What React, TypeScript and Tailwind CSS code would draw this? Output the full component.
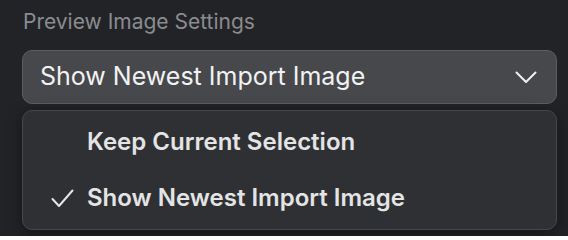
import React from 'react';

const items = [
  { label: 'Keep Current Selection', selected: false },
  { label: 'Show Newest Import Image', selected: true },
];

export default function App() {
  return (
    <div
      className="w-[568px] h-[236px] bg-[#222327] pl-[22px] pr-[11px] pt-[7px] overflow-hidden"
      style={{ fontFamily: 'Inter, "Noto Sans", sans-serif' }}
    >
      <div className="text-[21px] leading-[30px] text-[#8b8c8f] pl-[1px]">Preview Image Settings</div>

      {/* Select trigger */}
      <div className="mt-[13px] h-[54px] flex items-center justify-between rounded-[10px] border border-[#5d5e62] bg-[#47484c] pl-[17px] pr-[19px]">
        <span className="text-[25px] text-[#f2f2f3]">Show Newest Import Image</span>
        <svg width="22" height="13" viewBox="0 0 22 13" fill="none">
          <path d="M1.5 1.5 L11 11 L20.5 1.5" stroke="#f0f0f0" strokeWidth="2" strokeLinecap="round" strokeLinejoin="round" />
        </svg>
      </div>

      {/* Menu */}
      <div className="mt-[6px] rounded-[10px] border border-[#45474b] bg-[#2e3034] py-[3px] shadow-[0_4px_16px_rgba(0,0,0,0.4)]">
        {items.map((item) => (
          <div key={item.label} className="h-[56px] flex items-center">
            <div className="w-[64px] flex justify-end pr-[13px]">
              {item.selected && (
                <svg width="23" height="19" viewBox="0 0 23 19" fill="none">
                  <path d="M1.5 10 L8 17 L21.5 1.5" stroke="#e6e6e7" strokeWidth="2" strokeLinecap="round" strokeLinejoin="round" />
                </svg>
              )}
            </div>
            <span className="text-[24px] font-semibold text-[#e4e4e5]">{item.label}</span>
          </div>
        ))}
      </div>
    </div>
  );
}
